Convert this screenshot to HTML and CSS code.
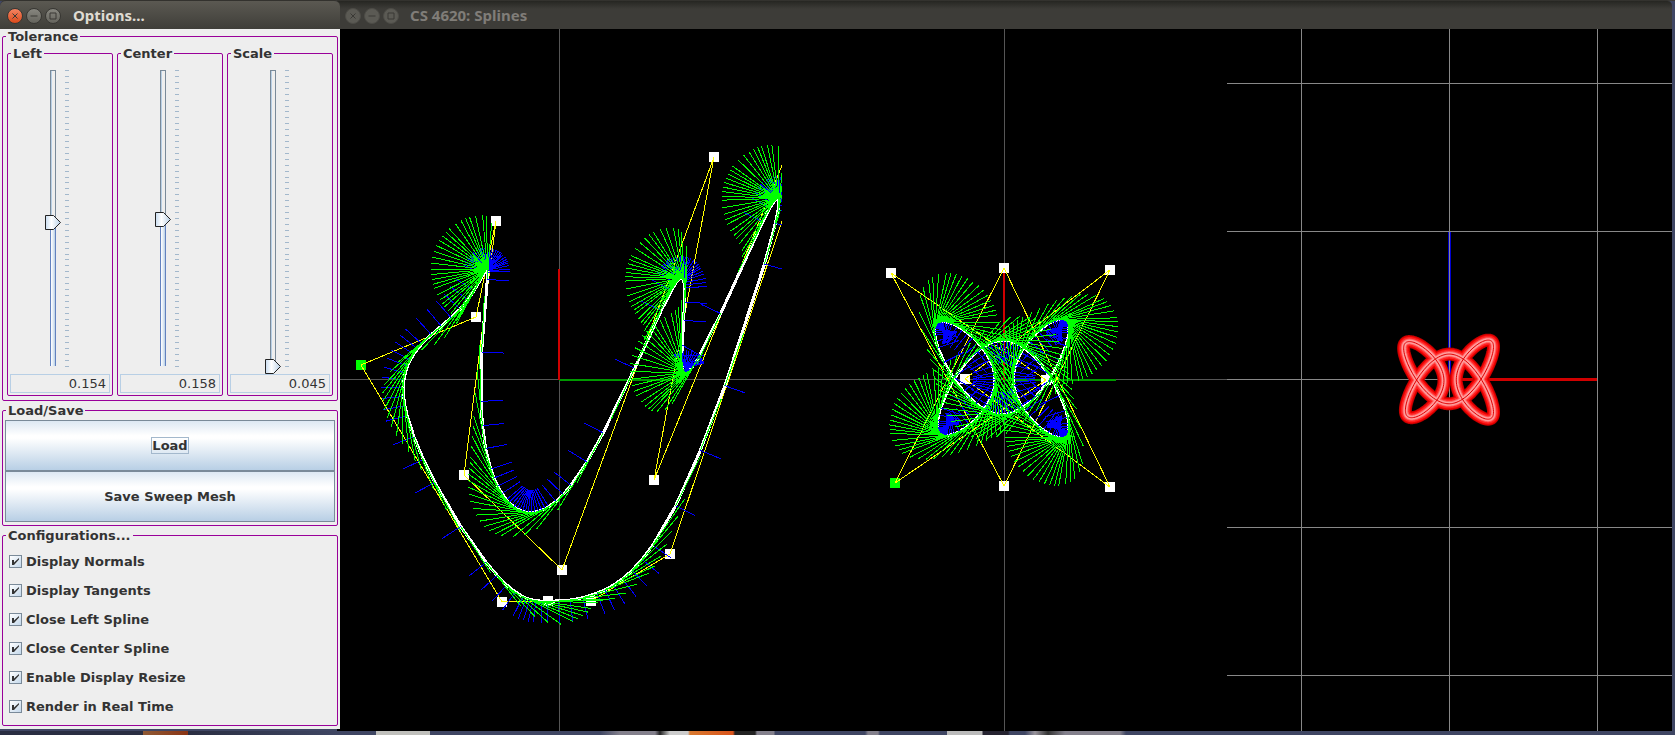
FILE: index.html
```html
<!DOCTYPE html>
<html lang="en">
<head>
  <meta charset="UTF-8">
  <title>CS 4620: Splines</title>
  <link rel="stylesheet" href="styles.css">
</head>
<body>
<div class="desktop">
  <section class="window options">
    <header class="titlebar">
      <button class="dot close" aria-label="Close"><svg viewBox="0 0 14 14"><path d="M4.500 4.500l5 5M9.500 4.500l-5 5"/></svg></button>
      <button class="dot" aria-label="Minimize"><svg viewBox="0 0 14 14"><path d="M3.500 7h7"/></svg></button>
      <button class="dot" aria-label="Maximize"><svg viewBox="0 0 14 14"><path d="M4 4h6v6h-6z"/></svg></button>
      <h1>Options...</h1>
    </header>
    <div class="panel">
      <fieldset>
        <legend>Tolerance</legend>
        <div class="sliders">
          <fieldset>
            <legend>Left</legend>
            <div class="slide">
              <input type="range" min="0" max="296" value="144" aria-label="Left tolerance">
              <svg class="ticks" width="4" height="297"></svg>
            </div>
            <input class="value" value="0.154" aria-label="Left value">
          </fieldset>
          <fieldset>
            <legend>Center</legend>
            <div class="slide">
              <input type="range" min="0" max="296" value="147" aria-label="Center tolerance">
              <svg class="ticks" width="4" height="297"></svg>
            </div>
            <input class="value" value="0.158" aria-label="Center value">
          </fieldset>
          <fieldset>
            <legend>Scale</legend>
            <div class="slide">
              <input type="range" min="0" max="296" value="0" aria-label="Scale">
              <svg class="ticks" width="4" height="297"></svg>
            </div>
            <input class="value" value="0.045" aria-label="Scale value">
          </fieldset>
        </div>
      </fieldset>

      <fieldset>
        <legend>Load/Save</legend>
        <div class="buttons">
          <button class="big"><span class="focused">Load</span></button>
          <button class="big"><span>Save Sweep Mesh</span></button>
        </div>
      </fieldset>

      <fieldset>
        <legend>Configurations...</legend>
        <div class="checks">
          <label><input type="checkbox" checked>Display Normals</label>
          <label><input type="checkbox" checked>Display Tangents</label>
          <label><input type="checkbox" checked>Close Left Spline</label>
          <label><input type="checkbox" checked>Close Center Spline</label>
          <label><input type="checkbox" checked>Enable Display Resize</label>
          <label><input type="checkbox" checked>Render in Real Time</label>
        </div>
      </fieldset>
    </div>
  </section>

  <section class="window splines">
    <header class="titlebar inactive">
      <button class="dot" aria-label="Close"><svg viewBox="0 0 14 14"><path d="M4.500 4.500l5 5M9.500 4.500l-5 5"/></svg></button>
      <button class="dot" aria-label="Minimize"><svg viewBox="0 0 14 14"><path d="M3.500 7h7"/></svg></button>
      <button class="dot" aria-label="Maximize"><svg viewBox="0 0 14 14"><path d="M4 4h6v6h-6z"/></svg></button>
      <h1>CS 4620: Splines</h1>
    </header>
    <div class="views">
      <svg id="left" viewBox="-222 -350 445 702"></svg>
      <svg id="center" viewBox="-222 -350 445 702"></svg>
      <svg id="mesh" viewBox="-222 -350 445 702"></svg>
    </div>
  </section>
</div>
<footer class="wallpaper"></footer>

<script src="script.js"></script>
</body>
</html>
```
FILE: styles.css
```css
* {
  box-sizing: border-box;
}

body {
  margin: 0;
  min-height: 100vh;
  display: flex;
  flex-direction: column;
  background: #3f4663;
  font-family: "DejaVu Sans", sans-serif;
  font-size: 13px;
  color: #333;
}

.desktop {
  flex: 1;
  display: flex;
  padding-right: 3px;
  background: linear-gradient(#3c3b37 1px, transparent 1px);
}

.window {
  display: flex;
  flex-direction: column;
}

.options {
  width: 340px;
  flex: none;
  align-self: flex-start;
  position: relative;
  z-index: 1;
}

.splines {
  flex: 1;
  min-width: 0;
  margin-left: -3px;
}

/* title bars */
.titlebar {
  height: 29px;
  display: flex;
  align-items: center;
  gap: 3px;
  padding: 2px 7px 0;
  border-top: 1px solid #33322e;
  border-radius: 6px 6px 0 0;
  background: linear-gradient(#5b5952, #3f3e39);
}

.titlebar h1 {
  margin: 0 0 0 9px;
  padding-bottom: 2px;
  font: bold 15px/20px "Noto Sans", sans-serif;
  color: #dfdbd2;
}

.inactive {
  padding-left: 8px;
  border-radius: 0 6px 0 0;
  background: linear-gradient(#262622, #3d3c38 8px);
}

.inactive h1 {
  margin-left: 8px;
  color: #807d78;
}

.dot {
  width: 16px;
  height: 16px;
  padding: 0;
  border: 1px solid #383733;
  border-radius: 50%;
  background: linear-gradient(#87867f, #65645d);
}

.dot svg {
  display: block;
  fill: none;
  stroke: #3a3935;
}

.close {
  background: linear-gradient(#f58462, #db4a1b);
}

.inactive .dot {
  border-color: #4d4c47;
  background: #5b5a54;
}

/* option panels */
.panel {
  display: flex;
  flex-direction: column;
  gap: 2px;
  padding: 0 2px 3px;
  background: #eee;
}

fieldset {
  min-width: 0;
  margin: 0;
  padding: 0 3px;
  border: 1px solid #909;
  border-radius: 2px;
}

legend {
  height: 15px;
  padding: 0 2px;
  font-weight: bold;
  line-height: 15px;
}

.sliders {
  display: grid;
  grid-template-columns: 1fr 1fr 1fr;
  gap: 4px;
  margin: 2px 1px 4px;
}

.sliders fieldset {
  padding: 0 2px 2px;
}

.sliders legend {
  margin-left: 1px;
}

.slide {
  display: flex;
  align-items: flex-end;
  gap: 4px;
  height: 313px;
  padding-left: 35px;
}

.slide input {
  appearance: none;
  writing-mode: vertical-lr;
  direction: rtl;
  width: 16px;
  height: 311px;
  margin: 0;
  background:
    linear-gradient(90deg, #6382bf 1px, #fff 1px, #e4edf6 3px, #b8cfe5 5px, #6382bf 5px) 5px calc(100% - 8px) / 6px var(--fill) no-repeat,
    linear-gradient(#7a8a99, #7a8a99) 5px 7px / 6px 1px no-repeat,
    linear-gradient(90deg, #7a8a99 1px, #b8cfe5 1px, #b8cfe5 2px, #eee 2px, #eee 5px, #7a8a99 5px) 5px 7px / 6px 296px no-repeat;
}

.slide input::-webkit-slider-thumb {
  appearance: none;
  width: 16px;
  height: 15px;
  border: 0;
  background: url("data:image/svg+xml,%3Csvg xmlns='http://www.w3.org/2000/svg' width='16' height='15'%3E%3Cdefs%3E%3ClinearGradient id='g'%3E%3Cstop stop-color='%23c8dcf0'/%3E%3Cstop offset='.4' stop-color='white'/%3E%3Cstop offset='1' stop-color='%23b8cfe5'/%3E%3C/linearGradient%3E%3C/defs%3E%3Cpath d='M.5 .5h8l7 7-7 7h-8z' fill='url(%23g)' stroke='%23222'/%3E%3C/svg%3E");
}

.ticks {
  margin-bottom: 7px;
  stroke: #a3b8cc;
  shape-rendering: crispEdges;
}

.value {
  display: block;
  width: 100%;
  height: 19px;
  padding: 0 3px;
  border: 1px solid #b8cfe5;
  background: #eee;
  font: 13px "DejaVu Sans", sans-serif;
  color: #333;
  text-align: right;
}

.buttons {
  padding: 2px 0 3px;
  margin: 0 -1px;
}

.big {
  display: block;
  width: 100%;
  height: 51px;
  border: 1px solid #7a8a99;
  background: linear-gradient(#dde8f3, #fff 30%, #fff 35%, #b8cfe5);
  font: bold 13px "DejaVu Sans", sans-serif;
  color: #333;
}

.focused {
  outline: 1px solid #a3b8cc;
}

.checks {
  display: grid;
  padding: 4px 3px 4px;
}

.checks label {
  display: flex;
  align-items: center;
  gap: 4px;
  height: 29px;
  font-weight: bold;
}

.checks input {
  appearance: none;
  width: 13px;
  height: 13px;
  margin: 0;
  border: 1px solid #7a8a99;
  background: linear-gradient(135deg, #fff, #c4d8eb);
}

.checks input:checked {
  background: url("data:image/svg+xml,%3Csvg xmlns='http://www.w3.org/2000/svg' width='11' height='11'%3E%3Cpath d='M2 4h2v2.500L9 2v1.500L4 9H2z' fill='%23333'/%3E%3C/svg%3E"), linear-gradient(135deg, #fff, #c4d8eb);
}

/* the three views */
.views {
  flex: 1;
  display: flex;
  background: #000;
}

.views svg {
  flex: 1;
  min-width: 0;
  shape-rendering: crispEdges;
  fill: none;
}

.grid { stroke: #555; }
.grid3 { stroke: #888; }
.hull { stroke: #ff0; }
.curve { stroke: #fff; stroke-width: 3; }
.tangent { stroke: #0f0; }
.normal { stroke: #00f; }
.x-axis { stroke: #090; stroke-width: 2; }
.y-axis { stroke: #d00000; stroke-width: 2; }
.red-axis { stroke: #d00000; stroke-width: 3; }
.blue-axis { stroke: #0000d0; stroke-width: 3; }
.point { fill: #fff; }
.first { fill: #0f0; }
.tube { shape-rendering: auto; stroke-linejoin: round; }

.wallpaper {
  height: 4px;
  background: linear-gradient(90deg, #2a2e42 143px, #8f5a35 143px, #8a3414 188px, #2a2e42 188px, #3f4663 340px, #3f4663 376px, #c0c0bc 376px, #c0c0bc 430px, #3f4663 430px, #3f4663 600px, #83808c 620px, #83808c 655px, #222 660px, #ccc 670px, #ccc 688px, #d9792f 690px, #d9531b 733px, #222 735px, #222 755px, #83808c 757px, #83808c 774px, #3f4663 775px, #3f4663 865px, #83808c 868px, #83808c 878px, #3f4663 880px, #3f4663 947px, #bbb 947px, #bbb 982px, #252330 983px, #252330 1008px, #3f4663 1010px, #3f4663 1025px, #99949c 1035px, #333 1048px, #83808c 1065px, #83808c 1120px, #3f4663 1126px);
}
```
FILE: script.js
```js
// control points, relative to the centre of each view
const leftPoints = [
  [-198, -14], [-57, 223], [-11, 222], [32, 222], [111, 175], [224, -161],
  [226, -221], [95, 101], [155, -222], [3, 191], [-95, 96], [-63, -158], [-83, -62]
];
const centerPoints = [
  [-109, 104], [0, -111], [106, 108], [-39, 0],
  [106, -109], [0, 107], [-113, -106], [42, 1]
];

const mix = (a, b, t) => [a[0] + (b[0] - a[0]) * t, a[1] + (b[1] - a[1]) * t];

function angle(a, b, c) {
  const d = Math.atan2(c[1] - b[1], c[0] - b[0]) - Math.atan2(b[1] - a[1], b[0] - a[0]);
  return Math.abs(Math.atan2(Math.sin(d), Math.cos(d)));
}

// split a bezier until it is flat enough, keep the start of every piece
function split(p, eps, depth, out) {
  const [a, b, c, d] = p;
  if (depth >= 8 || (angle(a, b, c) < eps / 2 && angle(b, c, d) < eps / 2)) {
    const len = Math.hypot(b[0] - a[0], b[1] - a[1]) || 1;
    out.push({ p: a, t: [(b[0] - a[0]) / len, (b[1] - a[1]) / len] });
    return;
  }
  const ab = mix(a, b, 0.5), bc = mix(b, c, 0.5), cd = mix(c, d, 0.5);
  const abc = mix(ab, bc, 0.5), bcd = mix(bc, cd, 0.5);
  const mid = mix(abc, bcd, 0.5);
  split([a, ab, abc, mid], eps, depth + 1, out);
  split([mid, bcd, cd, d], eps, depth + 1, out);
}

// closed uniform b-spline
function spline(points, eps) {
  const n = points.length, out = [];
  for (let i = 0; i < n; i++) {
    const [p0, p1, p2, p3] = [0, 1, 2, 3].map(k => points[(i + k) % n]);
    const b1 = mix(p1, p2, 1 / 3), b2 = mix(p1, p2, 2 / 3);
    const b0 = mix(mix(p0, p1, 2 / 3), b1, 0.5);
    const b3 = mix(b2, mix(p2, p3, 1 / 3), 0.5);
    split([b0, b1, b2, b3], eps, 0, out);
  }
  return out;
}

const path = (d, cls) => `<path class="${cls}" d="${d}"/>`;
const closed = list => "M" + list.map(p => p.map(v => v.toFixed(2)).join(" ")).join("L") + "Z";

function rays(samples, length, dir) {
  return samples.map(s => {
    const v = dir(s.t);
    return `M${s.p[0].toFixed(2)} ${s.p[1].toFixed(2)}l${(v[0] * length).toFixed(2)} ${(v[1] * length).toFixed(2)}`;
  }).join("");
}

function drawView(id, points, eps) {
  const samples = spline(points, eps);
  let html = path("M-223 .5H223M.5 -350V352", "grid");
  html += path("M0 1H112", "x-axis") + path("M0 1V-110", "y-axis");
  points.forEach((p, i) => {
    if (p[0] < 222) {
      html += `<rect class="point${i ? "" : " first"}" x="${p[0] - 5}" y="${p[1] - 5}" width="10" height="10"/>`;
    }
  });
  html += path(closed(points), "hull");
  html += path(closed(samples.map(s => s.p)), "curve");
  html += path(rays(samples, 22, t => [-t[1], t[0]]), "normal");
  html += path(rays(samples, 56, t => t), "tangent");
  document.getElementById(id).innerHTML = html;
}

function drawMesh() {
  const d = closed(spline(centerPoints, 0.1).map(s => [s.p[0] * 0.67 + 1, s.p[1] * 0.67 + 1]));
  let html = "";
  for (const k of [-2, -1, 0, 1, 2]) {
    if (k) html += path(`M-222 ${k * 148 + 0.5}H223`, "grid3");
    if (Math.abs(k) < 2) html += path(`M${k * 148 + 0.5} -350V352`, "grid3");
  }
  html += path("M-222 .5H0", "grid3");
  html += path("M0 .5H148", "red-axis") + path("M.5 0V-147", "blue-axis");
  html += path("M.5 0V-147", "grid3");
  const bands = [["#c00000", 13], ["#f00000", 11], ["#ff2020", 9], ["#ff5a5a", 6], ["#ff9c9c", 4], ["#e00000", 1]];
  for (const [color, width] of bands) {
    html += `<path class="tube" stroke="${color}" stroke-width="${width}" d="${d}"/>`;
  }
  document.getElementById("mesh").innerHTML = html;
}

drawView("left", leftPoints, 0.154);
drawView("center", centerPoints, 0.158);
drawMesh();

document.querySelectorAll(".ticks").forEach(svg => {
  let d = "";
  for (let i = 0; i <= 50; i++) d += `M0 ${Math.round(i * 5.92) + 0.5}h4`;
  svg.innerHTML = `<path d="${d}"/>`;
});

document.querySelectorAll(".slide input").forEach(input => {
  const update = () => input.style.setProperty("--fill", input.value + "px");
  input.addEventListener("input", update);
  update();
});
```
